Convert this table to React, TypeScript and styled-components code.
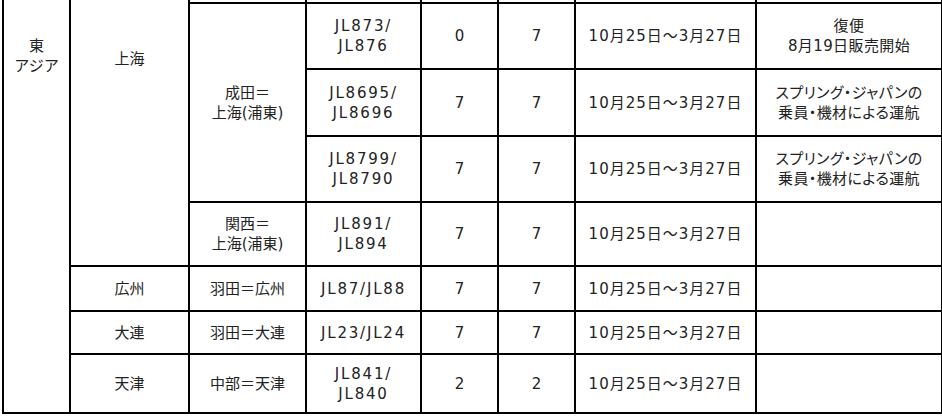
import styled, { createGlobalStyle } from "styled-components";

const GlobalStyle = createGlobalStyle`
  html, body {
    margin: 0;
    padding: 0;
    background: #ffffff;
  }
  body {
    font-family: "DejaVu Sans", "Noto Sans CJK JP", sans-serif;
  }
`;

const Frame = styled.div`
  width: 942px;
  height: 416px;
  overflow: hidden;
  background: #ffffff;
`;

const Table = styled.table`
  border-collapse: collapse;
  table-layout: fixed;
  width: 939px;
  margin-left: 2px;
  color: #222222;
  font-size: 15px;
  line-height: 20px;
  text-align: center;
`;

const Row = styled.tr<{ $h: number }>`
  height: ${(p) => p.$h}px;
`;

const Cell = styled.td<{ $top?: number; $spacing?: number }>`
  border: 2px solid #000000;
  padding: ${(p) => (p.$top !== undefined ? `${p.$top}px 0 0` : "0")};
  vertical-align: ${(p) => (p.$top !== undefined ? "top" : "middle")};
  letter-spacing: ${(p) => p.$spacing ?? 0}px;
  white-space: nowrap;
  overflow: hidden;
`;

// the row above is cut off by the top of the screenshot
const EdgeCell = styled(Cell)`
  border-top: none;
`;

const RegionCell = styled(Cell)`
  border-top: none;
  text-align: center;
`;

const NoteCell = styled(Cell)`
  font-size: 15px;
  font-feature-settings: "palt";
  letter-spacing: 0.4px;
`;

// grid widths between the vertical rules
const widths = [67, 119, 117, 115, 77, 77, 181, 186];

interface Flight {
  id: number;
  city?: { name: string; span: number };
  route?: { lines: string[]; span: number };
  flights: string[];
  out: string;
  back: string;
  period: string;
  note?: string[];
  h: number;
}

const PERIOD = "10月25日～3月27日";

const flights: Flight[] = [
  {
    id: 1,
    flights: ["JL873/", "JL876"],
    out: "0",
    back: "7",
    period: PERIOD,
    note: ["復便", "8月19日販売開始"],
    route: { lines: ["成田＝", "上海(浦東)"], span: 3 },
    h: 66,
  },
  {
    id: 2,
    flights: ["JL8695/", "JL8696"],
    out: "7",
    back: "7",
    period: PERIOD,
    note: ["スプリング・ジャパンの", "乗員・機材による運航"],
    h: 67,
  },
  {
    id: 3,
    flights: ["JL8799/", "JL8790"],
    out: "7",
    back: "7",
    period: PERIOD,
    note: ["スプリング・ジャパンの", "乗員・機材による運航"],
    h: 66,
  },
  {
    id: 4,
    flights: ["JL891/", "JL894"],
    out: "7",
    back: "7",
    period: PERIOD,
    route: { lines: ["関西＝", "上海(浦東)"], span: 1 },
    h: 64,
  },
  {
    id: 5,
    city: { name: "広州", span: 1 },
    route: { lines: ["羽田＝広州"], span: 1 },
    flights: ["JL87/JL88"],
    out: "7",
    back: "7",
    period: PERIOD,
    h: 45,
  },
  {
    id: 6,
    city: { name: "大連", span: 1 },
    route: { lines: ["羽田＝大連"], span: 1 },
    flights: ["JL23/JL24"],
    out: "7",
    back: "7",
    period: PERIOD,
    h: 43,
  },
  {
    id: 7,
    city: { name: "天津", span: 1 },
    route: { lines: ["中部＝天津"], span: 1 },
    flights: ["JL841/", "JL840"],
    out: "2",
    back: "2",
    period: PERIOD,
    h: 59,
  },
];

const Lines = ({ lines }: { lines: string[] }) => (
  <>
    {lines.map((line, i) => (
      <span key={i}>
        {i > 0 && <br />}
        {line}
      </span>
    ))}
  </>
);

const App = () => (
  <Frame>
    <GlobalStyle />
    <Table>
      <colgroup>
        {widths.map((w, i) => (
          <col key={i} style={{ width: w }} />
        ))}
      </colgroup>
      <tbody>
        <Row $h={3}>
          <RegionCell rowSpan={8} $top={36}>
            <Lines lines={["東", "アジア"]} />
          </RegionCell>
          <RegionCell rowSpan={5} $top={49}>
            上海
          </RegionCell>
          <EdgeCell />
          <EdgeCell />
          <EdgeCell />
          <EdgeCell />
          <EdgeCell />
          <EdgeCell />
        </Row>
        {flights.map((f) => (
          <Row key={f.id} $h={f.h}>
            {f.city && <Cell rowSpan={f.city.span}>{f.city.name}</Cell>}
            {f.route && (
              <Cell rowSpan={f.route.span}>
                <Lines lines={f.route.lines} />
              </Cell>
            )}
            <Cell $spacing={1.8}>
              <Lines lines={f.flights} />
            </Cell>
            <Cell>{f.out}</Cell>
            <Cell>{f.back}</Cell>
            <Cell $spacing={1}>{f.period}</Cell>
            <NoteCell>{f.note && <Lines lines={f.note} />}</NoteCell>
          </Row>
        ))}
      </tbody>
    </Table>
  </Frame>
);

export default App;
